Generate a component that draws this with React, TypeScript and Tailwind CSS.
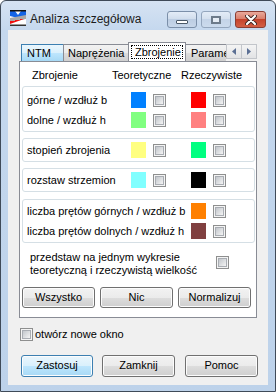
import React from 'react';

const font = { fontFamily: '"Liberation Sans", Arial, sans-serif' };

function CheckBox() {
  return (
    <span className="flex h-[13px] w-[13px] shrink-0 border border-[#8e8f8f] bg-[#f4f4f4] p-[1px]">
      <span className="flex-1 border border-[#a9adb3] bg-gradient-to-br from-[#c3c7cc] to-[#f4f4f4]" />
    </span>
  );
}

function Swatch({ color }: { color: string }) {
  return <span className="block h-[16px] w-[15px] shrink-0" style={{ background: color }} />;
}

function Row({ label, theo, real }: { label: string; theo?: string; real: string }) {
  return (
    <div className="flex h-[16px] items-center">
      <span className="w-[108px] shrink-0 whitespace-nowrap pl-[4px]">{label}</span>
      {theo ? (
        <>
          <Swatch color={theo} />
          <span className="ml-[7px]">
            <CheckBox />
          </span>
        </>
      ) : (
        <span className="w-[35px] shrink-0" />
      )}
      <span className="ml-[25px]">
        <Swatch color={real} />
      </span>
      <span className="ml-[7px]">
        <CheckBox />
      </span>
    </div>
  );
}

function Group({ children, className }: { children: React.ReactNode; className: string }) {
  return (
    <div className={`ml-[2px] mr-[1px] flex flex-col gap-[4px] rounded-[3px] border border-[#d5dfe5] ${className}`}>
      {children}
    </div>
  );
}

function Button({ label, def, className }: { label: string; def?: boolean; className: string }) {
  const look = def
    ? 'border-[#3c7fb1] bg-[linear-gradient(#eaf6fd_0%,#d9f0fc_50%,#bee6fd_50%,#a7d9f5_100%)]'
    : 'border-[#707070] bg-[linear-gradient(#f2f2f2_0%,#ebebeb_50%,#dddddd_50%,#cfcfcf_100%)]';
  return (
    <div className={`flex items-center justify-center rounded-[3px] border shadow-[inset_0_0_0_1px_#fcfcfc] ${look} ${className}`}>
      {label}
    </div>
  );
}

function AppIcon() {
  return (
    <svg width="16" height="16" viewBox="0 0 16 16">
      <rect x="0" y="0" width="16" height="16" fill="#fff" />
      <polygon points="0,1 5,1 8,5 11,1 16,1 16,6 8,8 0,6" fill="#1464e6" />
      <polygon points="0,8 16,5 16,9 0,12" fill="#a8a8a8" />
      <polygon points="0,14 0,11 5,11 5,10 10,10 10,9 14,9" fill="#f01010" />
      <rect x="0" y="0" width="16" height="1.5" fill="#111" />
      <rect x="0" y="14.5" width="16" height="1.5" fill="#333" />
    </svg>
  );
}

export default function App() {
  return (
    <div className="h-[392px] w-[276px] bg-white text-[11px] text-black" style={font}>
      <div className="flex h-full w-full flex-col rounded-t-[6px] border border-[#3f4a58] bg-[linear-gradient(#d6e3f3,#c5d8ee_29px,#bdd2ea)] px-[7px] pb-[6px]">
        {/* title bar */}
        <div className="flex h-[29px] shrink-0 items-start">
          <div className="ml-[2px] mt-[9px]">
            <AppIcon />
          </div>
          <span className="ml-[4px] mt-[10px] text-[12px] leading-[16px] text-[#1b1b1b]">Analiza szczegółowa</span>
          <div className="ml-auto mr-[2px] mt-[10px] flex gap-[4px]">
            <div className="flex h-[17px] w-[30px] items-center justify-center rounded-[3px] border border-[#7b8fa9] bg-[linear-gradient(#e3ecf7_0%,#cfdcec_50%,#bccde3_50%,#c7d7ea_100%)]">
              <span className="mt-[5px] h-[4px] w-[12px] rounded-[1px] border border-[#4a5968] bg-white" />
            </div>
            <div className="flex h-[17px] w-[30px] items-center justify-center rounded-[3px] border border-[#94a6bd] bg-[linear-gradient(#e3ecf7_0%,#d3dfed_50%,#c4d4e8_50%,#ccdbed_100%)]">
              <span className="h-[8px] w-[10px] border-[2px] border-[#6d7b8a] bg-[#e6edf5]" />
            </div>
            <div className="flex h-[17px] w-[31px] items-center justify-center rounded-[3px] border border-[#8a3d33] bg-[linear-gradient(#e9a99b_0%,#d87b68_50%,#c5432c_50%,#d35f45_100%)]">
              <svg width="12" height="10" viewBox="0 0 12 10">
                <path d="M2 1 L10 9 M10 1 L2 9" stroke="#3d2420" strokeWidth="4" strokeLinecap="round" />
                <path d="M2 1 L10 9 M10 1 L2 9" stroke="#fff" strokeWidth="2.2" strokeLinecap="round" />
              </svg>
            </div>
          </div>
        </div>

        {/* client */}
        <div className="flex flex-1 flex-col bg-[#f0f0f0] pt-[12px]">
          <div className="ml-[11px] w-[238px]">
            {/* tabs */}
            <div className="flex h-[19px] items-end">
              <div className="flex h-full flex-1 items-end overflow-hidden pl-[2px]">
                <div className="flex h-[17px] w-[43px] shrink-0 items-center border border-b-0 border-[#3c7fb1] bg-[linear-gradient(#eaf6fd_0%,#d9f0fc_50%,#bee6fd_50%,#a7d9f5_100%)] pl-[5px]">
                  NTM
                </div>
                <div className="-ml-px flex h-[17px] w-[67px] shrink-0 items-center border border-b-0 border-[#898c95] bg-[linear-gradient(#f2f2f2_0%,#ebebeb_50%,#dddddd_50%,#cfcfcf_100%)] pl-[4px]">
                  Naprężenia
                </div>
                <div className="relative z-10 -mb-px -ml-[2px] flex h-[20px] w-[58px] shrink-0 border border-b-0 border-[#898c95] bg-white p-[2px] pb-[3px]">
                  <span className="flex flex-1 items-center border border-dotted border-black pl-[3px]">Zbrojenie</span>
                </div>
                <div className="-ml-[2px] flex h-[17px] w-[60px] shrink-0 items-center border border-b-0 border-[#898c95] bg-[linear-gradient(#f2f2f2_0%,#ebebeb_50%,#dddddd_50%,#cfcfcf_100%)] pl-[6px]">
                  Parametry
                </div>
              </div>
              <div className="mb-[2px] flex self-end">
                <div className="flex h-[15px] w-[16px] items-center justify-center border border-[#c2c5ca] bg-[linear-gradient(#f4f4f4,#e2e3e5)]">
                  <svg width="4" height="7" viewBox="0 0 4 7">
                    <polygon points="4,0 0,3.5 4,7" fill="#5b6f94" />
                  </svg>
                </div>
                <div className="-ml-px flex h-[15px] w-[16px] items-center justify-center border border-[#c2c5ca] bg-[linear-gradient(#f4f4f4,#e2e3e5)]">
                  <svg width="4" height="7" viewBox="0 0 4 7">
                    <polygon points="0,0 4,3.5 0,7" fill="#5b6f94" />
                  </svg>
                </div>
              </div>
            </div>

            {/* panel */}
            <div className="flex flex-col border border-[#898c95] bg-white">
              <div className="mt-[6px] flex h-[14px] items-center">
                <span className="w-[92px] pl-[12px]">Zbrojenie</span>
                <span className="w-[69px]">Teoretyczne</span>
                <span>Rzeczywiste</span>
              </div>
              <Group className="mt-[4px] pb-[3px] pt-[5px]">
                <Row label="górne / wzdłuż b" theo="#0080ff" real="#ff0000" />
                <Row label="dolne / wzdłuż h" theo="#80ff80" real="#ff8080" />
              </Group>
              <Group className="mt-[6px] py-[3px]">
                <Row label="stopień zbrojenia" theo="#ffff80" real="#00ff80" />
              </Group>
              <Group className="mt-[6px] py-[3px]">
                <Row label="rozstaw strzemion" theo="#80ffff" real="#000000" />
              </Group>
              <Group className="mt-[7px] py-[3px]">
                <Row label="liczba prętów górnych / wzdłuż b" real="#ff8000" />
                <Row label="liczba prętów dolnych / wzdłuż h" real="#804040" />
              </Group>
              <div className="mt-[8px] flex items-center">
                <span className="w-[196px] shrink-0 pl-[10px] leading-[13px]">
                  przedstaw na jednym wykresie
                  <br />
                  teoretyczną i rzeczywistą wielkość
                </span>
                <span className="-mt-[3px]">
                  <CheckBox />
                </span>
              </div>
              <div className="mb-[9px] mt-[10px] flex gap-[5px] pl-[2px]">
                <Button label="Wszystko" className="h-[21px] w-[73px]" />
                <Button label="Nic" className="h-[21px] w-[73px]" />
                <Button label="Normalizuj" className="h-[21px] w-[73px]" />
              </div>
            </div>
          </div>

          <div className="ml-[12px] mt-[8px] flex items-center gap-[2px]">
            <CheckBox />
            <span>otwórz nowe okno</span>
          </div>

          <div className="ml-[13px] mt-[12px] flex">
            <Button label="Zastosuj" def className="h-[22px] w-[72px]" />
            <Button label="Zamknij" className="ml-[9px] h-[22px] w-[73px]" />
            <Button label="Pomoc" className="ml-[10px] h-[22px] w-[73px]" />
          </div>
        </div>
      </div>
    </div>
  );
}
